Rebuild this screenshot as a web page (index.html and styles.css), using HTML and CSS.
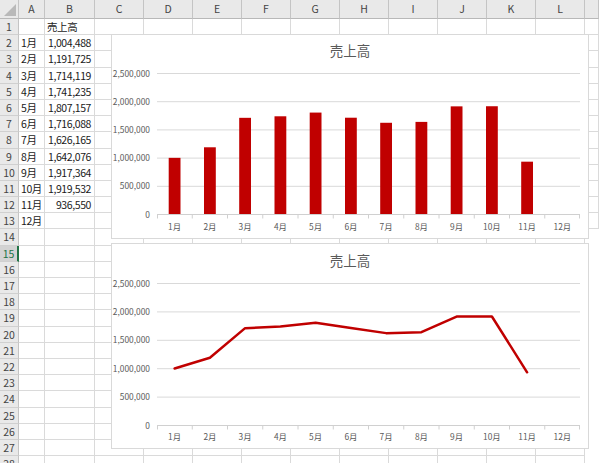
FILE: index.html
```html
<!DOCTYPE html>
<html lang="ja">
<head>
<meta charset="utf-8">
<title>売上高</title>
<link rel="stylesheet" href="styles.css">
</head>
<body>
<div class="sheet">
  <div class="row head"><span class="corner"><i class="tri"></i></span><span>A</span><span>B</span><span>C</span><span>D</span><span>E</span><span>F</span><span>G</span><span>H</span><span>I</span><span>J</span><span>K</span><span>L</span><span></span></div>
  <div class="row"><b>1</b><span></span><span>売上高</span><span></span><span></span><span></span><span></span><span></span><span></span><span></span><span></span><span></span><span></span><span></span></div>
  <div class="row"><b>2</b><span>1月</span><span class="n">1,004,488</span><span></span><span></span><span></span><span></span><span></span><span></span><span></span><span></span><span></span><span></span><span></span></div>
  <div class="row"><b>3</b><span>2月</span><span class="n">1,191,725</span><span></span><span></span><span></span><span></span><span></span><span></span><span></span><span></span><span></span><span></span><span></span></div>
  <div class="row"><b>4</b><span>3月</span><span class="n">1,714,119</span><span></span><span></span><span></span><span></span><span></span><span></span><span></span><span></span><span></span><span></span><span></span></div>
  <div class="row"><b>5</b><span>4月</span><span class="n">1,741,235</span><span></span><span></span><span></span><span></span><span></span><span></span><span></span><span></span><span></span><span></span><span></span></div>
  <div class="row"><b>6</b><span>5月</span><span class="n">1,807,157</span><span></span><span></span><span></span><span></span><span></span><span></span><span></span><span></span><span></span><span></span><span></span></div>
  <div class="row"><b>7</b><span>6月</span><span class="n">1,716,088</span><span></span><span></span><span></span><span></span><span></span><span></span><span></span><span></span><span></span><span></span><span></span></div>
  <div class="row"><b>8</b><span>7月</span><span class="n">1,626,165</span><span></span><span></span><span></span><span></span><span></span><span></span><span></span><span></span><span></span><span></span><span></span></div>
  <div class="row"><b>9</b><span>8月</span><span class="n">1,642,076</span><span></span><span></span><span></span><span></span><span></span><span></span><span></span><span></span><span></span><span></span><span></span></div>
  <div class="row"><b>10</b><span>9月</span><span class="n">1,917,364</span><span></span><span></span><span></span><span></span><span></span><span></span><span></span><span></span><span></span><span></span><span></span></div>
  <div class="row"><b>11</b><span>10月</span><span class="n">1,919,532</span><span></span><span></span><span></span><span></span><span></span><span></span><span></span><span></span><span></span><span></span><span></span></div>
  <div class="row"><b>12</b><span>11月</span><span class="n">936,550</span><span></span><span></span><span></span><span></span><span></span><span></span><span></span><span></span><span></span><span></span><span></span></div>
  <div class="row"><b>13</b><span>12月</span><span></span><span></span><span></span><span></span><span></span><span></span><span></span><span></span><span></span><span></span><span></span><span></span></div>
  <div class="row"><b>14</b><span></span><span></span><span></span><span></span><span></span><span></span><span></span><span></span><span></span><span></span><span></span><span></span></div>
  <div class="row"><b class="sel">15</b><span></span><span></span><span></span><span></span><span></span><span></span><span></span><span></span><span></span><span></span><span></span><span></span></div>
  <div class="row"><b>16</b><span></span><span></span><span></span><span></span><span></span><span></span><span></span><span></span><span></span><span></span><span></span><span></span></div>
  <div class="row"><b>17</b><span></span><span></span><span></span><span></span><span></span><span></span><span></span><span></span><span></span><span></span><span></span><span></span></div>
  <div class="row"><b>18</b><span></span><span></span><span></span><span></span><span></span><span></span><span></span><span></span><span></span><span></span><span></span><span></span></div>
  <div class="row"><b>19</b><span></span><span></span><span></span><span></span><span></span><span></span><span></span><span></span><span></span><span></span><span></span><span></span></div>
  <div class="row"><b>20</b><span></span><span></span><span></span><span></span><span></span><span></span><span></span><span></span><span></span><span></span><span></span><span></span></div>
  <div class="row"><b>21</b><span></span><span></span><span></span><span></span><span></span><span></span><span></span><span></span><span></span><span></span><span></span><span></span></div>
  <div class="row"><b>22</b><span></span><span></span><span></span><span></span><span></span><span></span><span></span><span></span><span></span><span></span><span></span><span></span></div>
  <div class="row"><b>23</b><span></span><span></span><span></span><span></span><span></span><span></span><span></span><span></span><span></span><span></span><span></span><span></span></div>
  <div class="row"><b>24</b><span></span><span></span><span></span><span></span><span></span><span></span><span></span><span></span><span></span><span></span><span></span><span></span></div>
  <div class="row"><b>25</b><span></span><span></span><span></span><span></span><span></span><span></span><span></span><span></span><span></span><span></span><span></span><span></span></div>
  <div class="row"><b>26</b><span></span><span></span><span></span><span></span><span></span><span></span><span></span><span></span><span></span><span></span><span></span><span></span></div>
  <div class="row"><b>27</b><span></span><span></span><span></span><span></span><span></span><span></span><span></span><span></span><span></span><span></span><span></span><span></span></div>
  <div class="row"><b>28</b><span></span><span></span><span></span><span></span><span></span><span></span><span></span><span></span><span></span><span></span><span></span><span></span></div>

  <div class="chart chart-bar">
    <svg width="478" height="205" viewBox="0 0 478 205">
      <text class="title" x="239" y="22">売上高</text>
      <g class="grid">
        <line x1="46" x2="469" y1="39.5" y2="39.5"/>
        <line x1="46" x2="469" y1="67.7" y2="67.7"/>
        <line x1="46" x2="469" y1="95.9" y2="95.9"/>
        <line x1="46" x2="469" y1="124.1" y2="124.1"/>
        <line x1="46" x2="469" y1="152.3" y2="152.3"/>
      </g>
      <g class="ylab">
        <text x="39" y="42.5">2,500,000</text>
        <text x="39" y="70.7">2,000,000</text>
        <text x="39" y="98.9">1,500,000</text>
        <text x="39" y="127.1">1,000,000</text>
        <text x="39" y="155.3">500,000</text>
        <text x="39" y="183.5">0</text>
      </g>
      <g class="bars">
        <rect x="57.7" y="123.85" width="11.8" height="56.65"/>
        <rect x="93.0" y="113.29" width="11.8" height="67.21"/>
        <rect x="128.2" y="83.82" width="11.8" height="96.68"/>
        <rect x="163.5" y="82.29" width="11.8" height="98.21"/>
        <rect x="198.7" y="78.58" width="11.8" height="101.92"/>
        <rect x="234.0" y="83.71" width="11.8" height="96.79"/>
        <rect x="269.2" y="88.78" width="11.8" height="91.72"/>
        <rect x="304.5" y="87.89" width="11.8" height="92.61"/>
        <rect x="339.7" y="72.36" width="11.8" height="108.14"/>
        <rect x="375.0" y="72.24" width="11.8" height="108.26"/>
        <rect x="410.2" y="127.68" width="11.8" height="52.82"/>
      </g>
      <g class="axis">
        <line x1="46" x2="469" y1="180.5" y2="180.5"/>
        <path d="M46.5 180.5v4M81.25 180.5v4M116.5 180.5v4M151.75 180.5v4M187 180.5v4M222.25 180.5v4M257.5 180.5v4M292.75 180.5v4M328 180.5v4M363.25 180.5v4M398.5 180.5v4M433.75 180.5v4M468.5 180.5v4"/>
      </g>
      <g class="xlab">
        <text x="63.6" y="196">1月</text>
        <text x="98.9" y="196">2月</text>
        <text x="134.1" y="196">3月</text>
        <text x="169.4" y="196">4月</text>
        <text x="204.6" y="196">5月</text>
        <text x="239.9" y="196">6月</text>
        <text x="275.1" y="196">7月</text>
        <text x="310.4" y="196">8月</text>
        <text x="345.6" y="196">9月</text>
        <text x="380.9" y="196">10月</text>
        <text x="416.1" y="196">11月</text>
        <text x="451.4" y="196">12月</text>
      </g>
    </svg>
  </div>

  <div class="chart chart-line">
    <svg width="478" height="206" viewBox="0 0 478 206">
      <text class="title" x="239" y="23">売上高</text>
      <g class="grid">
        <line x1="46" x2="469" y1="40.5" y2="40.5"/>
        <line x1="46" x2="469" y1="68.9" y2="68.9"/>
        <line x1="46" x2="469" y1="97.3" y2="97.3"/>
        <line x1="46" x2="469" y1="125.7" y2="125.7"/>
        <line x1="46" x2="469" y1="154.1" y2="154.1"/>
      </g>
      <g class="ylab">
        <text x="39" y="43.5">2,500,000</text>
        <text x="39" y="71.9">2,000,000</text>
        <text x="39" y="100.3">1,500,000</text>
        <text x="39" y="128.7">1,000,000</text>
        <text x="39" y="157.1">500,000</text>
        <text x="39" y="185.5">0</text>
      </g>
      <g class="axis">
        <line x1="46" x2="469" y1="182.5" y2="182.5"/>
        <path d="M46.5 182.5v4M81.25 182.5v4M116.5 182.5v4M151.75 182.5v4M187 182.5v4M222.25 182.5v4M257.5 182.5v4M292.75 182.5v4M328 182.5v4M363.25 182.5v4M398.5 182.5v4M433.75 182.5v4M468.5 182.5v4"/>
      </g>
      <polyline class="series" points="63.6,125.45 98.9,114.81 134.1,85.14 169.4,83.60 204.6,79.85 239.9,85.03 275.1,90.13 310.4,89.23 345.6,73.59 380.9,73.47 416.1,129.30"/>
      <g class="xlab">
        <text x="63.6" y="197">1月</text>
        <text x="98.9" y="197">2月</text>
        <text x="134.1" y="197">3月</text>
        <text x="169.4" y="197">4月</text>
        <text x="204.6" y="197">5月</text>
        <text x="239.9" y="197">6月</text>
        <text x="275.1" y="197">7月</text>
        <text x="310.4" y="197">8月</text>
        <text x="345.6" y="197">9月</text>
        <text x="380.9" y="197">10月</text>
        <text x="416.1" y="197">11月</text>
        <text x="451.4" y="197">12月</text>
      </g>
    </svg>
  </div>
</div>
</body>
</html>
```

FILE: styles.css
```css
html, body {
  margin: 0;
  padding: 0;
  background: #ffffff;
}

body {
  width: 599px;
  height: 463px;
  overflow: hidden;
  font-family: "Noto Sans CJK JP", "Noto Sans", sans-serif;
  color: #000000;
}

.sheet {
  position: relative;
  width: 599px;
  height: 463px;
  overflow: hidden;
}

.row {
  display: grid;
  grid-template-columns: 19px 26px 50px repeat(10, 49px) 1fr;
  height: 16.2px;
  font-size: 10.5px;
  line-height: 15px;
}

.row > span,
.row > b {
  box-sizing: border-box;
  border-right: 1px solid #dadada;
  border-bottom: 1px solid #dadada;
  white-space: nowrap;
  overflow: visible;
  font-weight: normal;
}

.row > span {
  padding-left: 2px;
  letter-spacing: -0.4px;
  color: #1a1a1a;
}

.row > span.n {
  text-align: right;
  padding-right: 3px;
}

.row > b {
  background: #e9e9e9;
  color: #444444;
  text-align: center;
  font-size: 10.5px;
  border-right: 1px solid #c4c4c4;
  border-bottom: 1px solid #d0d0d0;
}

.row > b.sel {
  background: #d3d3d3;
  color: #217346;
  border-right: 2px solid #217346;
}

.row.head {
  height: 19px;
  line-height: 18px;
}

.row.head > span {
  background: #e9e9e9;
  color: #444444;
  text-align: center;
  padding-left: 0;
  letter-spacing: 0;
  border-right: 1px solid #c4c4c4;
  border-bottom: 1px solid #b8b8b8;
}

.row.head > span.corner {
  position: relative;
}

.tri {
  position: absolute;
  right: 2px;
  bottom: 2px;
  width: 0;
  height: 0;
  border-left: 12px solid transparent;
  border-bottom: 12px solid #b9b9b9;
}

.chart {
  position: absolute;
  left: 111px;
  width: 478px;
  box-sizing: border-box;
  background: #ffffff;
  border: 1px solid #d9d9d9;
}

.chart svg {
  display: block;
  margin: -1px;
}

.chart-bar {
  top: 34px;
  height: 205px;
}

.chart-line {
  top: 243px;
  height: 206px;
}

.title {
  font-family: "Noto Sans CJK JP", sans-serif;
  font-size: 13.5px;
  fill: #595959;
  text-anchor: middle;
}

.grid line {
  stroke: #d9d9d9;
  stroke-width: 1;
}

.axis line,
.axis path {
  stroke: #d0d0d0;
  stroke-width: 1;
  fill: none;
}

.ylab text {
  font-family: "Noto Sans CJK JP", sans-serif;
  font-size: 8.4px;
  fill: #595959;
  text-anchor: end;
}

.xlab text {
  font-family: "Noto Sans CJK JP", sans-serif;
  font-size: 8.4px;
  fill: #595959;
  text-anchor: middle;
}

.bars rect {
  fill: #c00000;
}

.series {
  fill: none;
  stroke: #c00000;
  stroke-width: 2.5;
  stroke-linejoin: round;
  stroke-linecap: round;
}
```
